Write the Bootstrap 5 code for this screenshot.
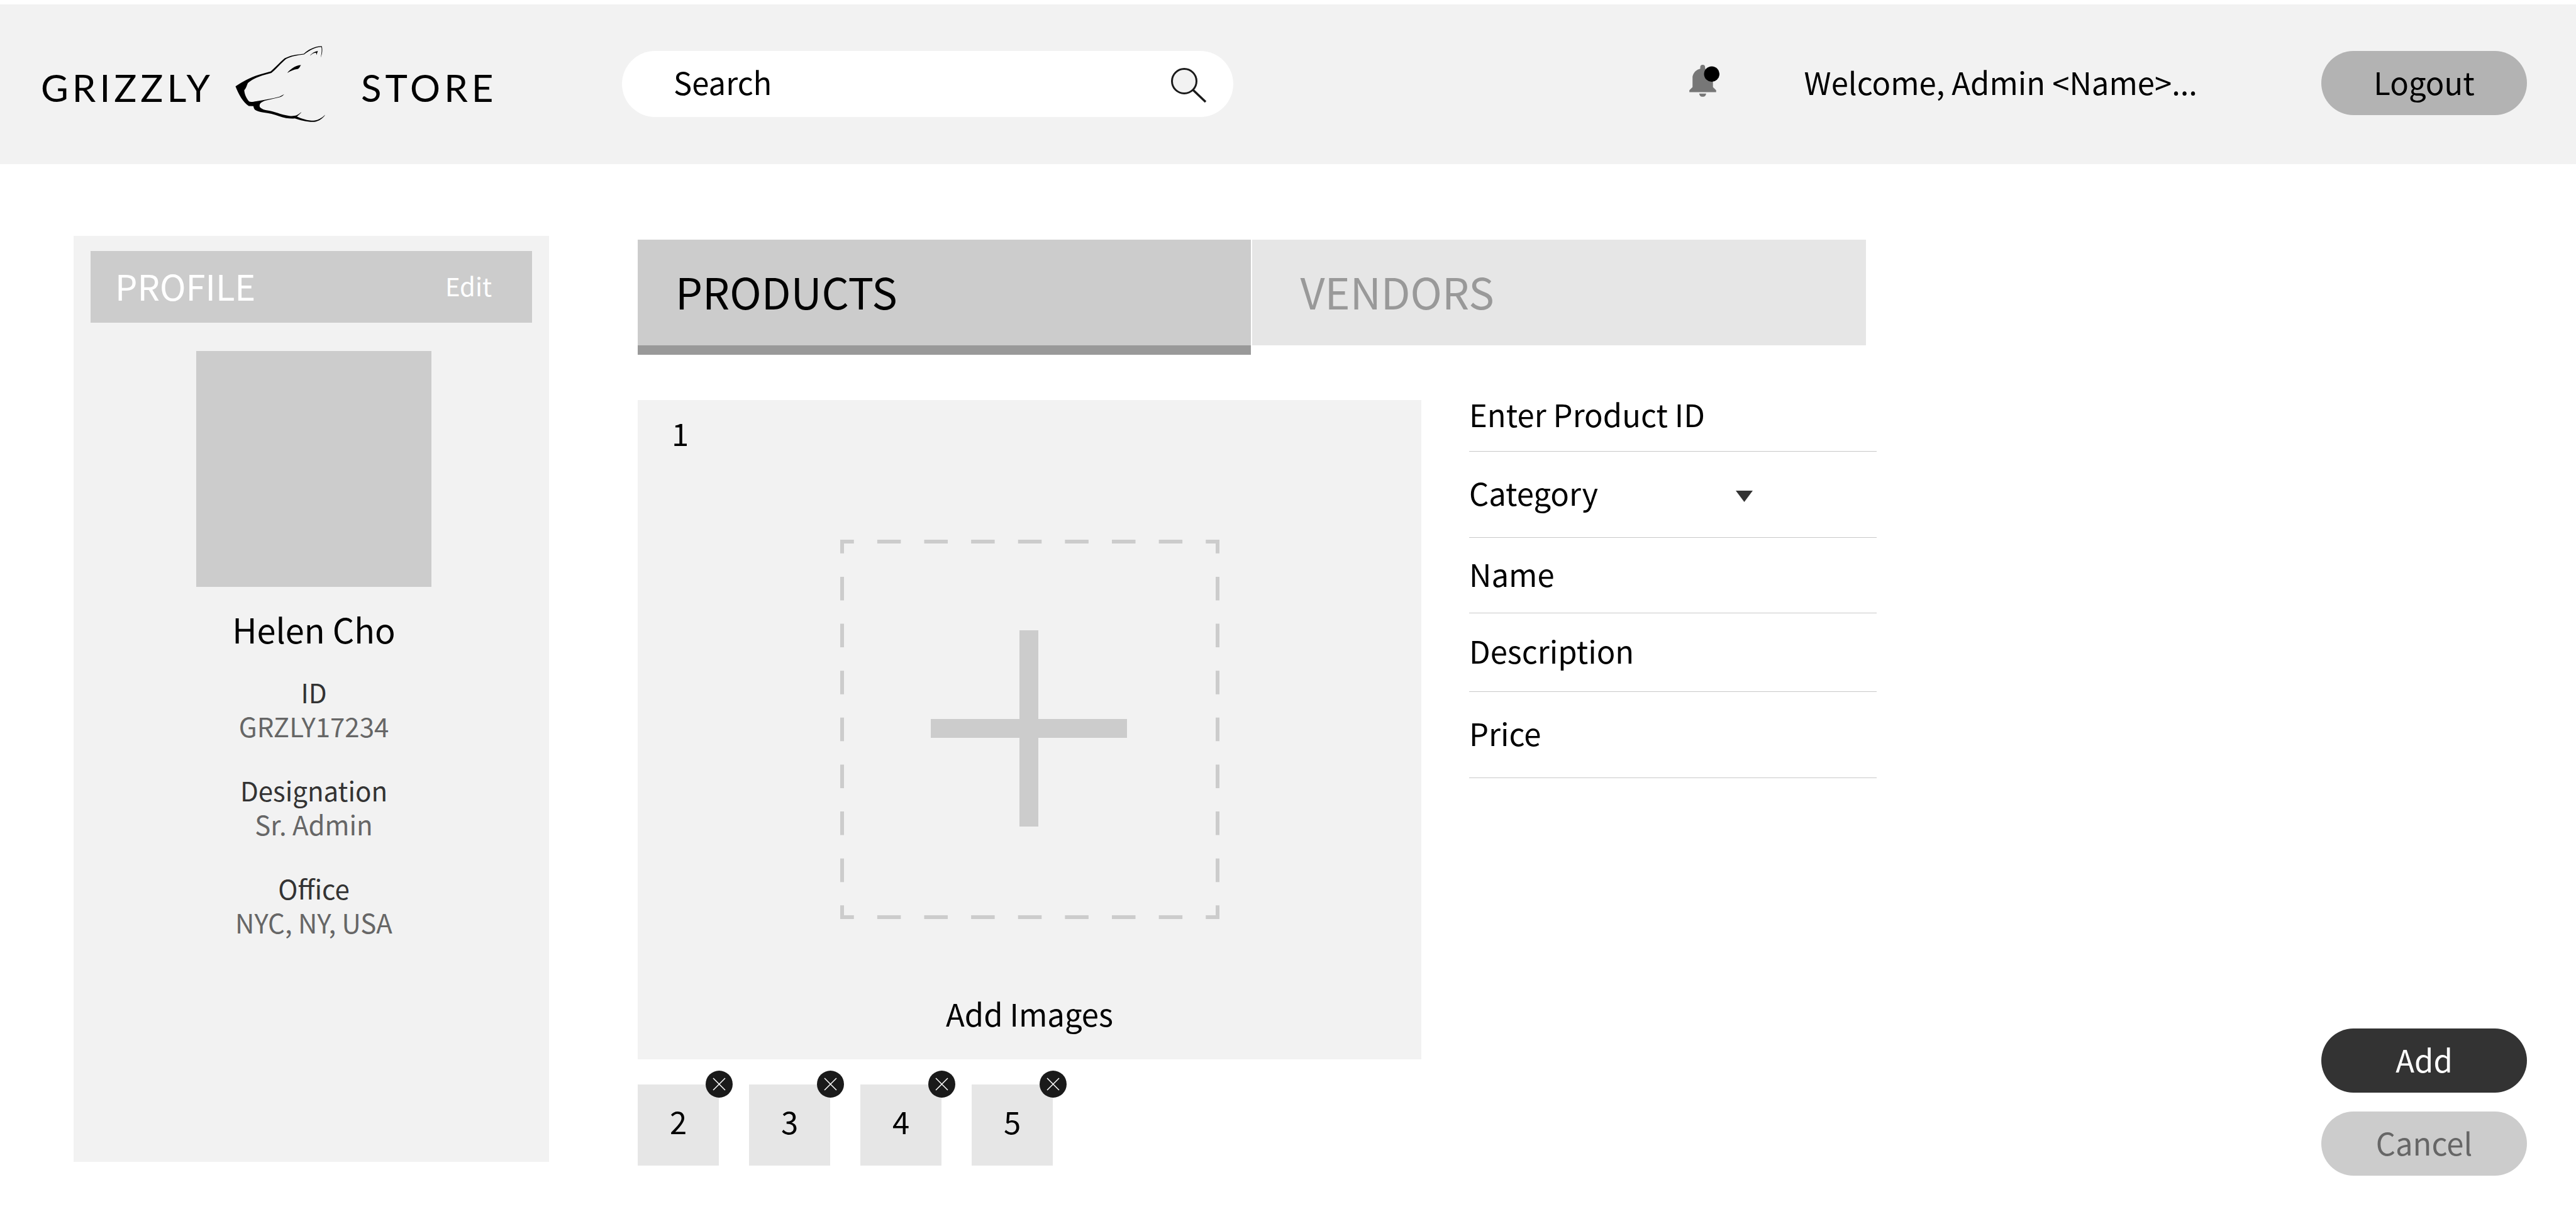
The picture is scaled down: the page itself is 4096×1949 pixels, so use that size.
<!DOCTYPE html>
<html lang="en">
<head>
<meta charset="utf-8">
<meta name="viewport" content="width=device-width, initial-scale=1">
<title>Grizzly Store – Add product</title>
<link href="https://cdn.jsdelivr.net/npm/bootstrap@5.3.0/dist/css/bootstrap.min.css" rel="stylesheet">
<style>
  body { font-family: "Noto Sans CJK SC", "Open Sans", sans-serif; font-size: 49px; line-height: 60px; color: #000; background: #fff; }
  .topbar { margin-top: 7px; padding: 74px 78px 75px 65px; background: #f2f2f2; }
  .brand { flex: 0 0 924px; font-family: Lato, sans-serif; font-size: 60px; line-height: 72px; letter-spacing: 6px; color: #000; }
  .brand span { padding-top: 10px; }
  .brand svg { width: 144px; height: 123px; margin: -9px 56px -9px 34px; }
  .search { flex: 0 1 972px; }
  .search input { height: 105px; padding: 0 120px 8px 82px; border: 0; font-size: 49px; color: #000; background: #fff; }
  .search button { top: 22px; right: 40px; line-height: 1; }
  input::placeholder { color: #000 !important; opacity: 1 !important; }
  .bell { margin-right: 135px; padding-bottom: 10px !important; line-height: 1; }
  .welcome { margin-right: 197px; padding-bottom: 8px; }
  .pill { width: 327px; height: 102px; padding: 0 0 4px; border: 0; border-radius: 51px; font-size: 49px; line-height: 60px; color: #000; background: #b3b3b3; }
  .pill-add { color: #fff; background: #333; }
  .pill-cancel { color: #666; background: #ccc; }
  main { padding: 114px 78px 80px 117px; }
  .profile { flex: 0 0 756px; margin-bottom: 22px; padding: 24px 27px; background: #f2f2f2; }
  .profile-bar { height: 114px; padding: 0 64px 4px 39px; color: #fff; background: #ccc; }
  .profile-bar h2 { font-size: 56px; font-weight: 400; line-height: 60px; }
  .profile-bar a { font-size: 40px; color: #fff; }
  .avatar { width: 374px; height: 375px; margin-top: 45px; background: #ccc; }
  .person { margin: 37px 0 43px; font-size: 54px; font-weight: 400; line-height: 60px; }
  .facts { font-size: 42px; line-height: 54px; }
  .facts dt { font-weight: 400; color: #333; }
  .facts dd { margin-bottom: 48px; color: #666; }
  .workspace { flex: 0 1 1970px; margin-left: 141px; padding-top: 6px; }
  .tabs { gap: 2px; margin-right: 17px; height: 183px; }
  .tabs a { flex: 1 1 50%; height: 168px; padding: 0 0 4px 60px; font-size: 68px; color: #999; background: #e6e6e6; }
  .tabs a + a { padding-left: 76px; }
  .tabs a.active { height: 183px; color: #000; background: #ccc; border-bottom: 15px solid #999; }
  .editor { gap: 76px; margin-top: 52px; }
  .gallery { margin-top: 20px; }
  .panel { padding: 22px 0 43px; background: #f2f2f2; }
  .panel-number { padding-left: 54px; }
  .dropzone { margin-top: 140px; color: #000; }
  .dropzone svg { width: 603px; height: 603px; margin-bottom: 120px; }
  .thumbs { gap: 48px; margin-top: 40px; }
  .thumb { width: 129px; height: 129px; padding-bottom: 14px; background: #e6e6e6; }
  .thumb button { top: -22px; right: -22px; width: 43px; height: 43px; line-height: 1; }
  .thumb svg { width: 43px; height: 43px; }
  .fields { flex: 0 0 648px; min-width: 0; }
  .field { height: 125px; padding-bottom: 6px; border-bottom: 1px solid #c8c8c8; }
  .field input, .field select { width: 0; min-width: 0; height: 72px; padding: 0 0 0 12px; border: 0; outline: 0; appearance: none; background: transparent; color: #000; }
  .field-first { height: 102px; padding-bottom: 18px; }
  .field-choice, .field-last { height: 137px; }
  .field-short { height: 120px; }
  .choice { width: 451px; }
  .choice svg { right: 0; top: 33px; width: 27px; height: 18px; }
  .actions { gap: 30px; }
</style>
</head>
<body class="d-flex flex-column min-vh-100">

<header class="topbar d-flex align-items-center">
  <a class="brand d-flex align-items-center text-decoration-none" href="#">
    <span>GRIZZLY</span>
    <svg viewBox="60 62 602 512" aria-hidden="true">
      <path d="M62 334C110 302 158 274 222 255L296 234C330 206 358 172 388 148C428 126 470 122 516 117C548 88 590 66 636 67C642 94 638 120 628 143C634 118 637 94 633 72C592 72 552 94 518 122C474 127 434 134 398 152C366 178 334 218 300 245L240 262C202 274 168 292 144 312C136 328 134 346 120 360C122 388 136 416 152 434C164 440 180 436 200 433C250 425 304 416 354 403L386 386C378 396 368 402 356 406L268 427C250 431 236 438 228 446C220 456 220 468 228 476C240 486 254 490 268 493C320 500 360 522 420 530C440 532 456 530 468 526C482 520 490 510 501 505C492 514 482 524 470 534C500 548 540 562 582 562C616 558 640 540 659 522C642 548 616 566 586 570C540 572 494 560 456 547C430 550 392 546 352 532C320 520 284 512 246 507C222 504 202 496 190 488C184 480 182 472 181 465L150 464C112 440 84 390 62 334Z"/>
      <path d="M406 245C424 222 462 192 498 193C488 202 490 214 474 219C450 222 428 232 406 245ZM556 131C568 112 590 102 609 98C607 108 602 116 601 126C599 120 600 114 596 110C582 110 568 120 556 131Z"/>
    </svg>
    <span>STORE</span>
  </a>

  <form class="search position-relative" role="search">
    <input class="form-control rounded-pill" type="text" placeholder="Search" aria-label="Search">
    <button class="btn p-0 border-0 position-absolute" type="button" aria-label="Run search">
      <svg width="60" height="64" viewBox="0 0 60 64" fill="none" stroke="#1a1a1a">
        <circle cx="22" cy="26" r="19.5" fill="#f2f2f2" stroke-width="3"/>
        <path d="M36 40L56 59" stroke-width="3.5"/>
      </svg>
    </button>
  </form>

  <button class="bell btn p-0 border-0 ms-auto" type="button" aria-label="Notifications">
    <svg width="48" height="51" viewBox="102 68 198 212">
      <path fill="#777" d="M174 94V84A16 16 0 0 1 206 84V94C240 100 258 126 258 156V216L279 236V249H102V236L123 216V146C130 116 150 100 174 94ZM167 258H213C211 272 204 279 194 279H186C176 279 169 272 167 258Z"/>
      <circle cx="250" cy="129" r="51"/>
    </svg>
  </button>
  <span class="welcome text-nowrap">Welcome, Admin &lt;Name&gt;...</span>
  <button class="pill btn align-self-start" type="button">Logout</button>
</header>

<main class="d-flex flex-grow-1">
  <aside class="profile">
    <div class="profile-bar d-flex align-items-center justify-content-between">
      <h2 class="m-0">PROFILE</h2>
      <a class="text-decoration-none" href="#">Edit</a>
    </div>
    <div class="d-flex flex-column align-items-center text-center ps-2">
      <div class="avatar"></div>
      <h3 class="person">Helen Cho</h3>
      <dl class="facts m-0">
        <dt>ID</dt><dd>GRZLY17234</dd>
        <dt>Designation</dt><dd>Sr. Admin</dd>
        <dt>Office</dt><dd>NYC, NY, USA</dd>
      </dl>
    </div>
  </aside>

  <section class="workspace">
    <nav class="tabs d-flex align-items-start">
      <a class="active d-flex align-items-center text-decoration-none" href="#" aria-current="page">PRODUCTS</a>
      <a class="d-flex align-items-center text-decoration-none" href="#">VENDORS</a>
    </nav>

    <div class="editor d-flex align-items-start">
      <div class="gallery flex-grow-1">
        <div class="panel d-flex flex-column">
          <span class="panel-number">1</span>
          <a class="dropzone d-flex flex-column align-items-center text-decoration-none" href="#">
            <svg viewBox="0 0 603 603" aria-hidden="true">
              <rect x="3" y="3" width="597" height="597" fill="none" stroke="#ccc" stroke-width="6" stroke-dasharray="37.5 37.125" stroke-dashoffset="18.75"/>
              <path fill="#ccc" d="M0 0H6V6H0ZM285 144H315V285H456V315H315V456H285V315H144V285H285Z"/>
            </svg>
            <span>Add Images</span>
          </a>
        </div>
        <div class="thumbs d-flex">
          <div class="thumb position-relative d-flex align-items-center justify-content-center">2
            <button class="btn p-0 border-0 position-absolute" type="button" aria-label="Remove image 2"><svg viewBox="0 0 43 43"><circle cx="21.5" cy="21.5" r="21.5" fill="#1a1a1a"/><path d="M12 12L31 31M31 12L12 31" stroke="#fff" stroke-width="1.5"/></svg></button>
          </div>
          <div class="thumb position-relative d-flex align-items-center justify-content-center">3
            <button class="btn p-0 border-0 position-absolute" type="button" aria-label="Remove image 3"><svg viewBox="0 0 43 43"><circle cx="21.5" cy="21.5" r="21.5" fill="#1a1a1a"/><path d="M12 12L31 31M31 12L12 31" stroke="#fff" stroke-width="1.5"/></svg></button>
          </div>
          <div class="thumb position-relative d-flex align-items-center justify-content-center">4
            <button class="btn p-0 border-0 position-absolute" type="button" aria-label="Remove image 4"><svg viewBox="0 0 43 43"><circle cx="21.5" cy="21.5" r="21.5" fill="#1a1a1a"/><path d="M12 12L31 31M31 12L12 31" stroke="#fff" stroke-width="1.5"/></svg></button>
          </div>
          <div class="thumb position-relative d-flex align-items-center justify-content-center">5
            <button class="btn p-0 border-0 position-absolute" type="button" aria-label="Remove image 5"><svg viewBox="0 0 43 43"><circle cx="21.5" cy="21.5" r="21.5" fill="#1a1a1a"/><path d="M12 12L31 31M31 12L12 31" stroke="#fff" stroke-width="1.5"/></svg></button>
          </div>
        </div>
      </div>

      <form class="fields" id="product">
        <div class="field field-first d-flex align-items-center">
          <label class="text-nowrap" for="pid">Enter Product ID</label>
          <input class="flex-grow-1" id="pid" type="text">
        </div>
        <div class="field field-choice d-flex align-items-center">
          <div class="choice position-relative d-flex align-items-center">
            <label for="category">Category</label>
            <select class="flex-grow-1" id="category"><option value=""></option></select>
            <svg class="position-absolute pe-none" viewBox="0 0 27 18" aria-hidden="true"><path fill="#333" d="M0 0H27L13.5 18Z"/></svg>
          </div>
        </div>
        <div class="field field-short d-flex align-items-center">
          <label for="pname">Name</label>
          <input class="flex-grow-1" id="pname" type="text">
        </div>
        <div class="field d-flex align-items-center">
          <label for="desc">Description</label>
          <input class="flex-grow-1" id="desc" type="text">
        </div>
        <div class="field field-last d-flex align-items-center">
          <label for="price">Price</label>
          <input class="flex-grow-1" id="price" type="text">
        </div>
      </form>
    </div>
  </section>

  <div class="actions d-flex flex-column ms-auto align-self-end">
    <button class="pill pill-add btn" type="submit" form="product">Add</button>
    <button class="pill pill-cancel btn" type="button">Cancel</button>
  </div>
</main>

<script src="https://cdn.jsdelivr.net/npm/bootstrap@5.3.0/dist/js/bootstrap.bundle.min.js"></script>
</body>
</html>
